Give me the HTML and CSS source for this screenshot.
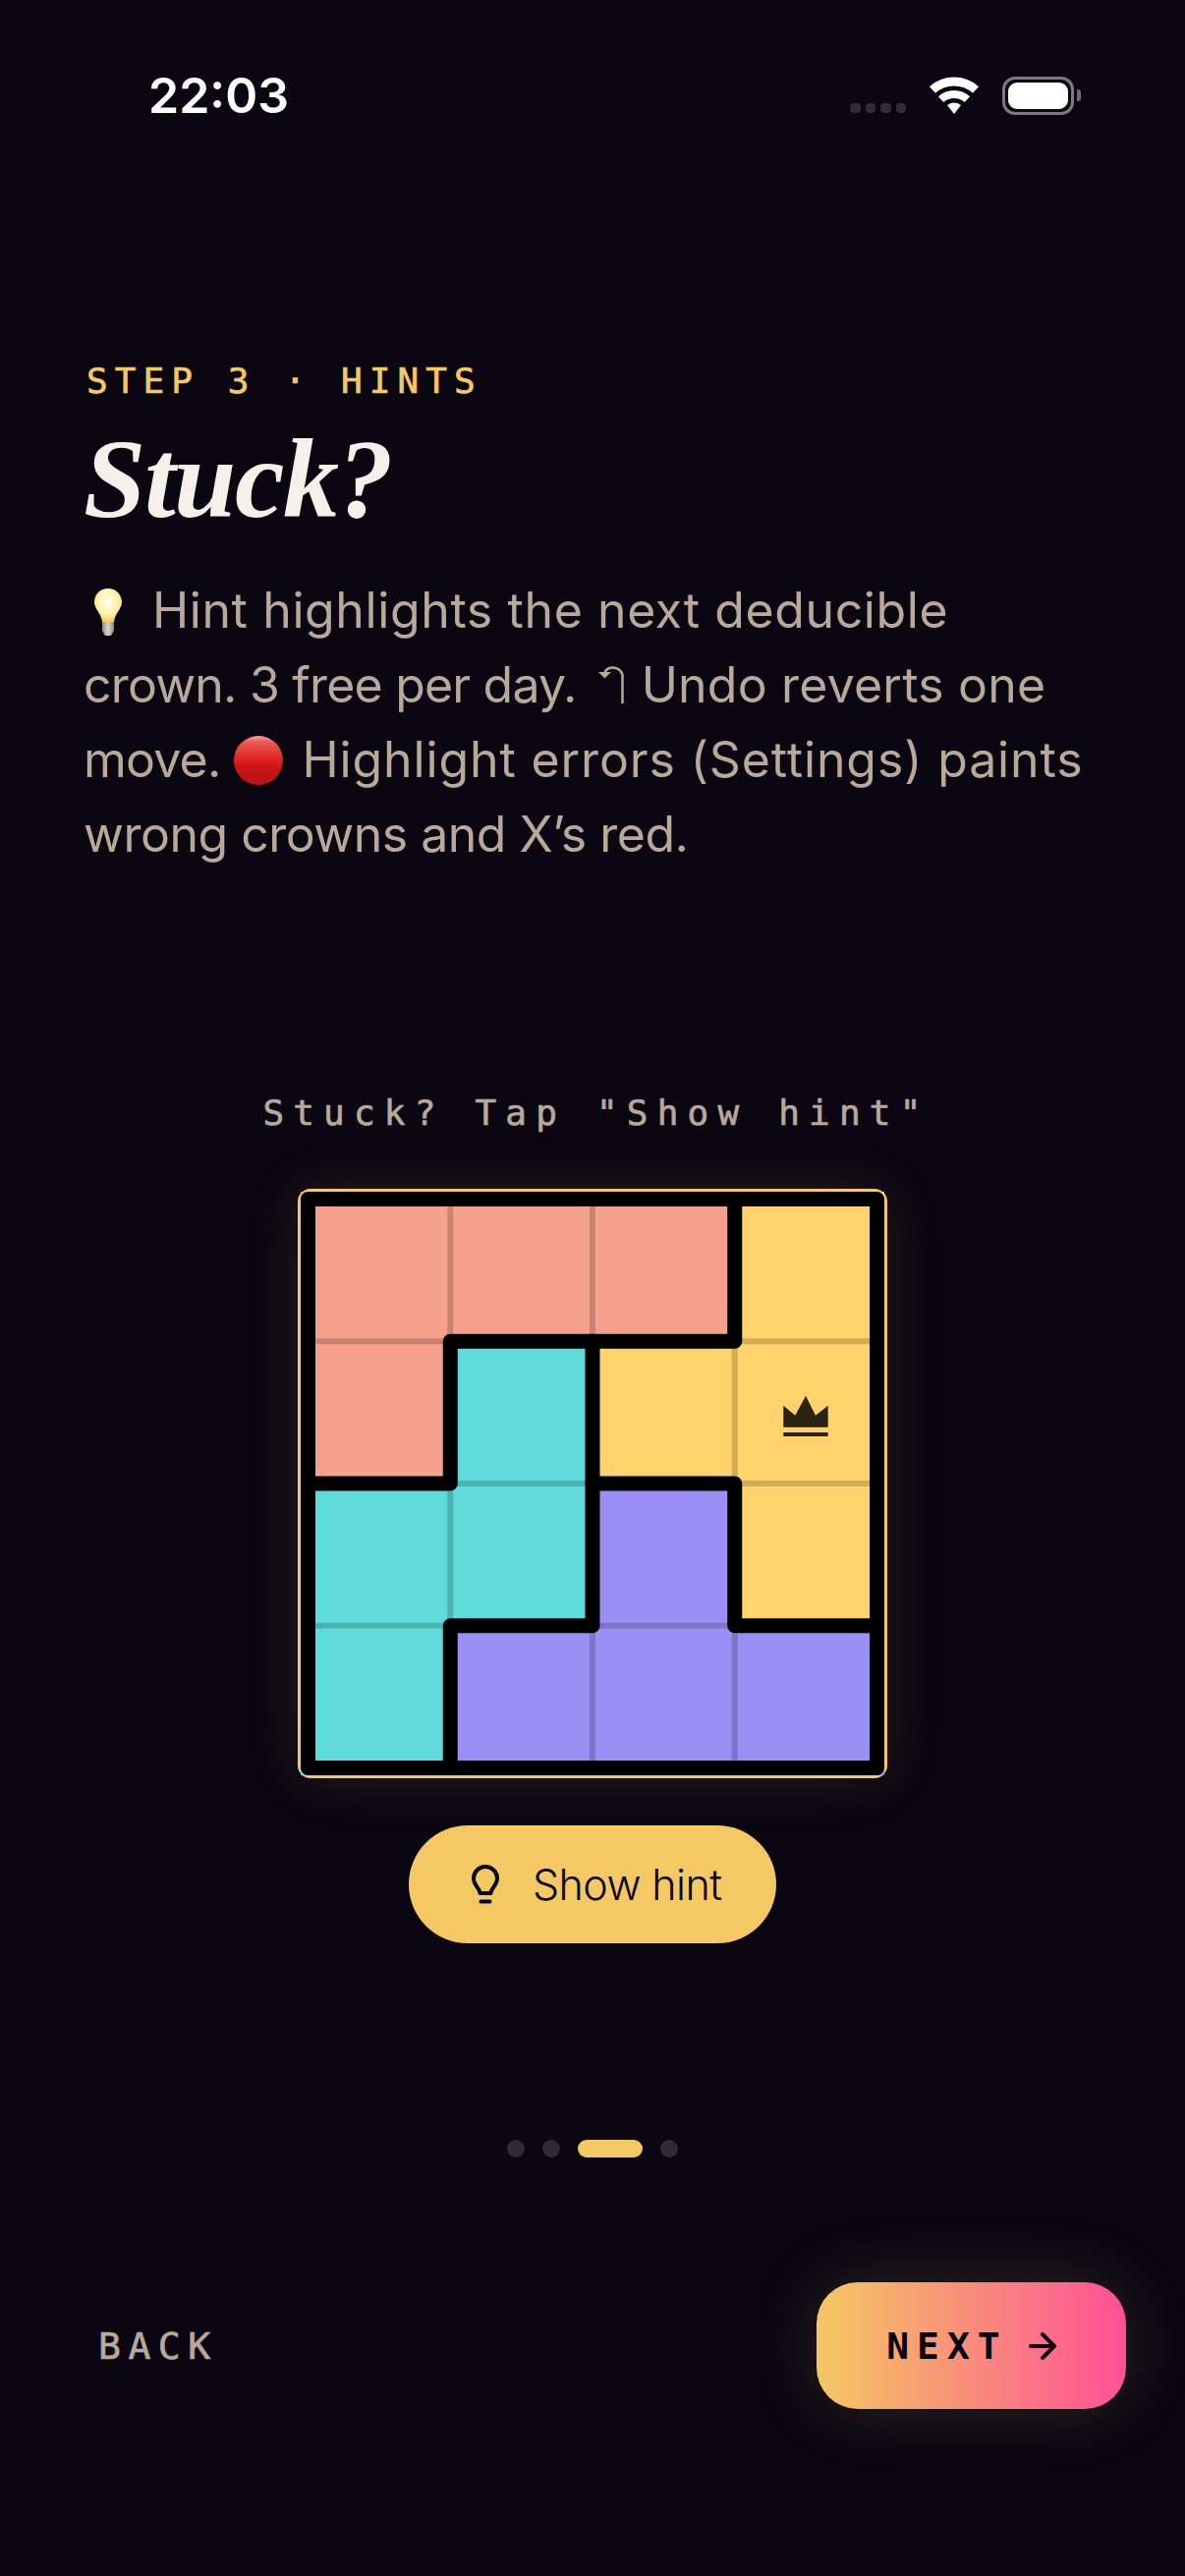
FILE: index.html
```html
<!DOCTYPE html>
<html lang="en">
<head>
<meta charset="utf-8">
<title>Stuck?</title>
<link rel="stylesheet" href="styles.css">
</head>
<body>
<main class="screen">
  <header class="status">
    <span class="time">22:03</span>
    <div class="status-icons">
      <div class="signal"><i></i><i></i><i></i><i></i></div>
      <svg class="wifi" viewBox="0 0 50 38" aria-hidden="true">
        <path class="wifi-arc" d="M3 13.5A33 33 0 0 1 47 13.5" stroke-width="9"/>
        <path class="wifi-arc" d="M11.6 23.1A20 20 0 0 1 38.4 23.1" stroke-width="8"/>
        <path class="wifi-fill" d="M25 38L18 29A11 11 0 0 1 32 29Z"/>
      </svg>
      <div class="battery"><div class="battery-level"></div></div>
      <div class="battery-nub"></div>
    </div>
  </header>

  <section class="intro">
    <p class="eyebrow">STEP 3 · HINTS</p>
    <h1 class="title">Stuck?</h1>
    <p class="body-text"><svg class="emoji-bulb" viewBox="0 0 28 48" aria-hidden="true"><defs><radialGradient id="bulbGlow" cx="0.5" cy="0.4" r="0.6"><stop offset="0" stop-color="#fffef0"/><stop offset="0.6" stop-color="#fff3b0"/><stop offset="1" stop-color="#f5cf55"/></radialGradient><linearGradient id="bulbBase" x1="0" x2="1" y1="0" y2="0"><stop offset="0" stop-color="#8d8d88"/><stop offset="0.5" stop-color="#d8d8d2"/><stop offset="1" stop-color="#85857f"/></linearGradient></defs><path fill="url(#bulbGlow)" d="M14 0C6 0 0 6 0 14C0 21 7 25 8 34H20C21 25 28 21 28 14C28 6 22 0 14 0Z"/><path fill="url(#bulbBase)" d="M8 34H20V43L17 48H11L8 43Z"/></svg><span class="seg-wide">Hint highlights the next deducible</span><br>crown. 3 free per day.<svg class="glyph-undo" viewBox="0 0 26 44" aria-hidden="true"><path class="undo-line" d="M24.5 43V14A10 10 0 0 0 6.500 11"/><path class="undo-head" d="M0 11H13L6.500 17.500Z"/></svg><span class="seg-mid">Undo reverts one</span><br>move.<svg class="emoji-red" viewBox="0 0 50 50" aria-hidden="true"><defs><linearGradient id="redBall" x1="0" x2="0" y1="0" y2="1"><stop offset="0" stop-color="#f7a5a0"/><stop offset="0.12" stop-color="#ef5a55"/><stop offset="0.45" stop-color="#e02a26"/><stop offset="0.6" stop-color="#cc1715"/><stop offset="1" stop-color="#b81412"/></linearGradient></defs><circle cx="25" cy="25" r="25" fill="url(#redBall)"/></svg><span class="seg-widest">Highlight errors (Settings) paints</span><br><span class="seg-last">wrong crowns and X’s red.</span></p>
  </section>

  <section class="demo">
    <p class="caption">Stuck? Tap "Show hint"</p>
    <div class="board">
      <svg class="board-svg" viewBox="0 0 594 594" aria-label="Puzzle board">
        <rect class="c-coral" x="0" y="0" width="594" height="300"/>
        <rect class="c-coral" x="0" y="0" width="152" height="300"/>
        <rect class="c-yellow" x="442" y="0" width="152" height="442"/>
        <rect class="c-yellow" x="297" y="152" width="150" height="146"/>
        <rect class="c-teal" x="152" y="152" width="146" height="300"/>
        <rect class="c-teal" x="0" y="297" width="152" height="297"/>
        <rect class="c-purple" x="297" y="297" width="150" height="297"/>
        <rect class="c-purple" x="152" y="442" width="442" height="152"/>
        <path class="thin" d="M152.250 7.500V152.250M297 7.500V152.250M152.250 297V441.750M297 441.750V586.500M441.750 152.250V297M441.750 441.750V586.500"/>
        <path class="thin" d="M7.500 152.250H152.250M441.750 152.250H586.500M152.250 297H297M441.750 297H586.500M7.500 441.750H152.250M297 441.750H441.750"/>
        <path class="thick" d="M7.500 7.500H586.500V586.500H7.500Z"/>
        <path class="thick" d="M441.750 7.500V152.250H152.250V297H7.500"/>
        <path class="thick" d="M297 152.250V441.750H152.250V586.500"/>
        <path class="thick" d="M297 297H441.750V441.750H586.500"/>
        <path class="crown" d="M491.300 217.700L503.300 227.700L514 207.700L524 227.700L536.700 217.700V239.700H491.300Z"/>
        <rect class="crown" x="491.300" y="245" width="45.400" height="4"/>
      </svg>
    </div>
    <button class="hint-btn" type="button">
      <svg class="hint-icon" viewBox="0 0 28 40" aria-hidden="true"><path d="M8.500 29C8.500 24 2 21 2 14A12 12 0 0 1 26 14C26 21 19.500 24 19.500 29Z"/><path d="M9.500 37.500H18.500"/></svg>
      <span>Show hint</span>
    </button>
  </section>

  <nav class="pager" aria-label="Progress">
    <i class="dot"></i><i class="dot"></i><i class="dot dot-active"></i><i class="dot"></i>
  </nav>

  <footer class="footer">
    <span class="back">BACK</span>
    <button class="next" type="button">
      <span>NEXT</span>
      <svg class="next-icon" viewBox="0 0 28 28" aria-hidden="true"><path d="M2 14H26M14 2L26 14L14 26"/></svg>
    </button>
  </footer>
</main>
</body>
</html>
```

FILE: styles.css
```css
* { box-sizing: border-box; }
html, body { margin: 0; padding: 0; background: #0a0612; }
.screen {
  width: 1206px;
  height: 2622px;
  display: flex;
  flex-direction: column;
  background: #0a0612;
  overflow: hidden;
  font-family: "Inter", "Noto Sans", sans-serif;
}

.status {
  height: 74px;
  margin-top: 60px;
  padding: 0 106px 0 151px;
  display: flex;
  align-items: center;
  justify-content: space-between;
}
.time {
  font-family: "Inter", sans-serif;
  font-weight: 600;
  font-size: 50px;
  line-height: 1;
  color: #fff;
}
.status-icons { display: flex; align-items: center; }
.signal { display: flex; gap: 5px; margin-top: 26px; margin-right: 24px; }
.signal i { display: block; width: 10.500px; height: 10px; border-radius: 4px; background: #2f2c36; }
.wifi { width: 50px; height: 38px; margin-right: 24px; }
.wifi-arc { fill: none; stroke: #fff; }
.wifi-fill { fill: #fff; }
.battery {
  width: 73px;
  height: 39px;
  border: 3px solid #7c7a80;
  border-radius: 13px;
  padding: 3px 3px;
}
.battery-level { width: 100%; height: 100%; background: #fff; border-radius: 9px; }
.battery-nub { width: 4px; height: 12px; margin-left: 3px; background: #6f6d73; border-radius: 0 3px 3px 0; }

.intro { padding: 0 85px; margin-top: 232px; }
.eyebrow {
  margin: 0;
  padding-left: 3px;
  font-family: "DejaVu Sans Mono", monospace;
  font-size: 36px;
  line-height: 44px;
  letter-spacing: 7.100px;
  -webkit-text-stroke: 0.7px #f4c862;
  color: #f4c862;
  white-space: nowrap;
}
.title {
  margin: 20px 0 0;
  font-family: "Liberation Serif", serif;
  font-style: italic;
  font-weight: 700;
  font-size: 114px;
  line-height: 116px;
  letter-spacing: -1.500px;
  color: #f5f1ea;
}
.body-text {
  margin: 37px 0 0;
  font-size: 50px;
  font-weight: 400;
  line-height: 76px;
  letter-spacing: -0.800px;
  color: #b8a99a;
  white-space: nowrap;
}
.seg-wide { letter-spacing: 0.600px; }
.seg-mid { letter-spacing: 0.200px; }
.seg-widest { letter-spacing: 0.870px; }
.seg-last { letter-spacing: -0.500px; }
.emoji-bulb { width: 28px; height: 48px; margin: 0 31px 0 11px; vertical-align: -8px; }
.glyph-undo { width: 26px; height: 44px; margin: 0 18px 0 22px; vertical-align: -2px; }
.undo-line { fill: none; stroke: #b8a99a; stroke-width: 2.500px; }
.undo-head { fill: #b8a99a; }
.emoji-red { width: 50px; height: 50px; margin: 0 19px 0 14px; vertical-align: -8px; }

.demo { margin-top: 224px; display: flex; flex-direction: column; align-items: center; }
.caption {
  margin: 0;
  padding-left: 8px;
  font-family: "DejaVu Sans Mono", monospace;
  font-size: 36px;
  line-height: 44px;
  letter-spacing: 9.200px;
  -webkit-text-stroke: 0.7px #b8a99a;
  color: #b8a99a;
  white-space: nowrap;
}
.board {
  margin-top: 55px;
  width: 600px;
  height: 600px;
  border: 3px solid #f4c862;
  border-radius: 13px;
  box-shadow: 0 0 60px rgba(244, 200, 98, 0.12);
  background: #000;
}
.board-svg { display: block; width: 594px; height: 594px; }
.c-coral { fill: #f6a08e; }
.c-yellow { fill: #ffd36b; }
.c-teal { fill: #5edbda; }
.c-purple { fill: #9c8ef5; }
.thin { fill: none; stroke: #000; stroke-opacity: 0.18; stroke-width: 6; }
.thick { fill: none; stroke: #000; stroke-width: 15; stroke-linejoin: round; stroke-linecap: round; }
.crown { fill: #2a2213; }

.hint-btn {
  margin-top: 48px;
  width: 374px;
  height: 120px;
  border: 0;
  border-radius: 60px;
  padding: 0 0 0 64px;
  display: flex;
  align-items: center;
  gap: 34px;
  background: #f4c862;
  color: #0a0612;
  font-family: "Inter", sans-serif;
  font-size: 43px;
  font-weight: 350;
  letter-spacing: -0.600px;
}
.hint-icon { width: 28px; height: 40px; flex: none; }
.hint-icon path { fill: none; stroke: #0a0612; stroke-width: 4; stroke-linejoin: round; stroke-linecap: round; }

.pager { margin-top: 200px; display: flex; justify-content: center; gap: 18px; }
.dot { display: block; width: 18px; height: 18px; border-radius: 9px; background: #2e2b35; }
.dot-active { width: 66px; background: #f4c862; }

.footer {
  margin-top: 127px;
  padding: 0 60px 0 100px;
  display: flex;
  align-items: center;
  justify-content: space-between;
}
.back {
  font-family: "DejaVu Sans Mono", monospace;
  font-size: 38px;
  letter-spacing: 7.500px;
  -webkit-text-stroke: 0.7px #b8a99a;
  color: #b8a99a;
}
.next {
  width: 315px;
  height: 129px;
  border: 0;
  border-radius: 42px;
  padding: 0;
  display: flex;
  align-items: center;
  justify-content: center;
  gap: 21px;
  background: linear-gradient(90deg, #f4c862, #ff4f96);
  box-shadow: 0 0 72px rgba(244, 200, 98, 0.16);
  color: #0a0612;
  font-family: "DejaVu Sans Mono", monospace;
  font-weight: 700;
  font-size: 38px;
  letter-spacing: 8px;
}
.next-icon { width: 28px; height: 28px; }
.next-icon path { fill: none; stroke: #0a0612; stroke-width: 4; stroke-linecap: round; stroke-linejoin: round; }
```
